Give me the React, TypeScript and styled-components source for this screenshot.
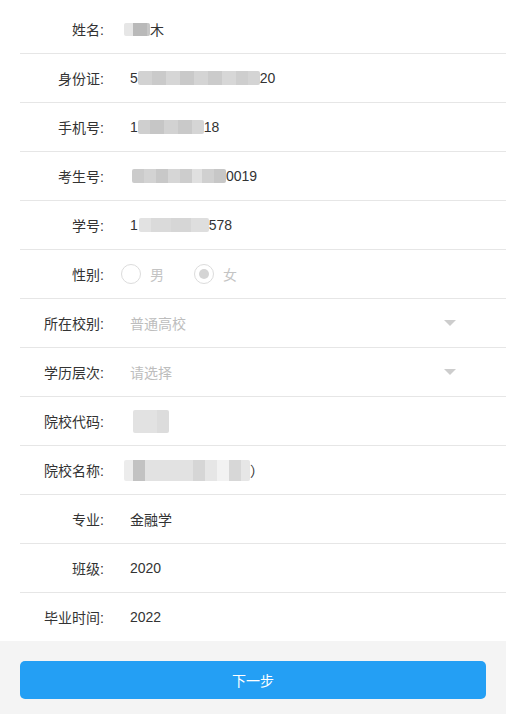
import styled, { createGlobalStyle } from 'styled-components';

const GlobalStyle = createGlobalStyle`
  html, body {
    margin: 0;
    padding: 0;
    background: #f4f4f4;
  }
  body {
    font-family: "Liberation Sans", "Noto Sans CJK SC", sans-serif;
    font-size: 14px;
    color: #333;
  }
`;

const Page = styled.div`
  width: 506px;
  min-height: 714px;
  background: #f4f4f4;
`;

const Form = styled.div`
  background: #fff;
  padding-top: 5px;
`;

const Row = styled.div<{ $last?: boolean }>`
  display: flex;
  align-items: center;
  height: 48px;
  margin-left: 20px;
  border-bottom: ${(p) => (p.$last ? 'none' : '1px solid #e6e6e6')};
`;

const Label = styled.div`
  width: 84px;
  text-align: right;
  color: #333;
  white-space: nowrap;
`;

const Value = styled.div<{ $muted?: boolean; $shift?: number }>`
  flex: 1;
  display: flex;
  align-items: center;
  margin-left: ${(p) => 26 - (p.$shift ?? 0)}px;
  color: ${(p) => (p.$muted ? '#bdbdbd' : '#333')};
`;

const Mosaic = styled.span<{ $h: number; $offset?: number }>`
  display: inline-flex;
  height: ${(p) => p.$h}px;
  margin-left: ${(p) => p.$offset ?? 0}px;
  border-radius: 2px;
  overflow: hidden;
`;

const Cell = styled.span<{ $w: number; $c: string }>`
  display: block;
  width: ${(p) => p.$w}px;
  height: 100%;
  background: ${(p) => p.$c};
`;

const RadioGroup = styled.div`
  display: flex;
  align-items: center;
  gap: 30px;
  margin-left: -9px;
`;

const RadioItem = styled.label`
  display: flex;
  align-items: center;
  gap: 9px;
  color: #c4c4c4;
`;

const RadioCircle = styled.span<{ $checked?: boolean }>`
  position: relative;
  width: 18px;
  height: 18px;
  border: 1px solid #dcdcdc;
  border-radius: 50%;
  box-sizing: content-box;

  &::after {
    content: '';
    display: ${(p) => (p.$checked ? 'block' : 'none')};
    position: absolute;
    left: 4px;
    top: 4px;
    width: 10px;
    height: 10px;
    border-radius: 50%;
    background: #d4d4d4;
  }
`;

const Arrow = styled.span`
  margin-left: auto;
  margin-right: 50px;
  width: 0;
  height: 0;
  border-left: 6px solid transparent;
  border-right: 6px solid transparent;
  border-top: 6px solid #cdcdcd;
`;

const Footer = styled.div`
  padding: 20px 20px 15px;
`;

const NextButton = styled.button`
  display: block;
  width: 100%;
  height: 38px;
  border: none;
  border-radius: 5px;
  background: #249ff4;
  color: #fff;
  font-family: "Liberation Sans", "Noto Sans CJK SC", sans-serif;
  font-size: 14px;
  cursor: pointer;
`;

type Block = [number, string];

function Blur({ cells, h, offset }: { cells: Block[]; h: number; offset?: number }) {
  return (
    <Mosaic $h={h} $offset={offset}>
      {cells.map(([w, c], i) => (
        <Cell key={i} $w={w} $c={c} />
      ))}
    </Mosaic>
  );
}

const idCells: Block[] = [
  [14, '#d2d2d2'], [14, '#cacaca'], [14, '#d6d6d6'], [14, '#c9c9c9'],
  [14, '#d4d4d4'], [14, '#cbcbcb'], [14, '#d7d7d7'], [12, '#cecece'], [12, '#d4d4d4'],
];

export default function App() {
  return (
    <>
      <GlobalStyle />
      <Page>
        <Form>
          <Row>
            <Label>姓名:</Label>
            <Value $shift={6}>
              <Blur h={13} cells={[[9, '#e6e6e6'], [14, '#b9b9b9'], [3, '#c6c6c6']]} />
              <span>木</span>
            </Value>
          </Row>
          <Row>
            <Label>身份证:</Label>
            <Value>
              5<Blur h={14} cells={idCells} />20
            </Value>
          </Row>
          <Row>
            <Label>手机号:</Label>
            <Value>
              1<Blur h={14} cells={[[12, '#cfcfcf'], [14, '#c6c6c6'], [14, '#d2d2d2'], [14, '#c9c9c9'], [12, '#d5d5d5']]} />18
            </Value>
          </Row>
          <Row>
            <Label>考生号:</Label>
            <Value>
              <Blur h={14} offset={2} cells={[[12, '#cbcbcb'], [12, '#d3d3d3'], [12, '#c8c8c8'], [12, '#d6d6d6'], [12, '#cdcdcd'], [10, '#e0e0e0'], [12, '#d0d0d0'], [12, '#c7c7c7']]} />0019
            </Value>
          </Row>
          <Row>
            <Label>学号:</Label>
            <Value>
              1<Blur h={14} offset={1} cells={[[12, '#e2e2e2'], [20, '#dadada'], [20, '#d6d6d6'], [18, '#dedede']]} />578
            </Value>
          </Row>
          <Row>
            <Label>性别:</Label>
            <Value>
              <RadioGroup>
                <RadioItem>
                  <RadioCircle />男
                </RadioItem>
                <RadioItem>
                  <RadioCircle $checked />女
                </RadioItem>
              </RadioGroup>
            </Value>
          </Row>
          <Row>
            <Label>所在校别:</Label>
            <Value $muted>
              普通高校
              <Arrow />
            </Value>
          </Row>
          <Row>
            <Label>学历层次:</Label>
            <Value $muted>
              请选择
              <Arrow />
            </Value>
          </Row>
          <Row>
            <Label>院校代码:</Label>
            <Value>
              <Blur h={23} offset={3} cells={[[24, '#e2e2e2'], [12, '#dcdcdc']]} />
            </Value>
          </Row>
          <Row>
            <Label>院校名称:</Label>
            <Value $shift={6}>
              <Blur h={21} cells={[[9, '#ececec'], [12, '#c2c2c2'], [48, '#e2e2e2'], [12, '#d6d6d6'], [12, '#e6e6e6'], [12, '#f2f2f2'], [12, '#d7d7d7'], [9, '#e6e6e6']]} />
              <span>）</span>
            </Value>
          </Row>
          <Row>
            <Label>专业:</Label>
            <Value>金融学</Value>
          </Row>
          <Row>
            <Label>班级:</Label>
            <Value>2020</Value>
          </Row>
          <Row $last>
            <Label>毕业时间:</Label>
            <Value>2022</Value>
          </Row>
        </Form>
        <Footer>
          <NextButton>下一步</NextButton>
        </Footer>
      </Page>
    </>
  );
}
